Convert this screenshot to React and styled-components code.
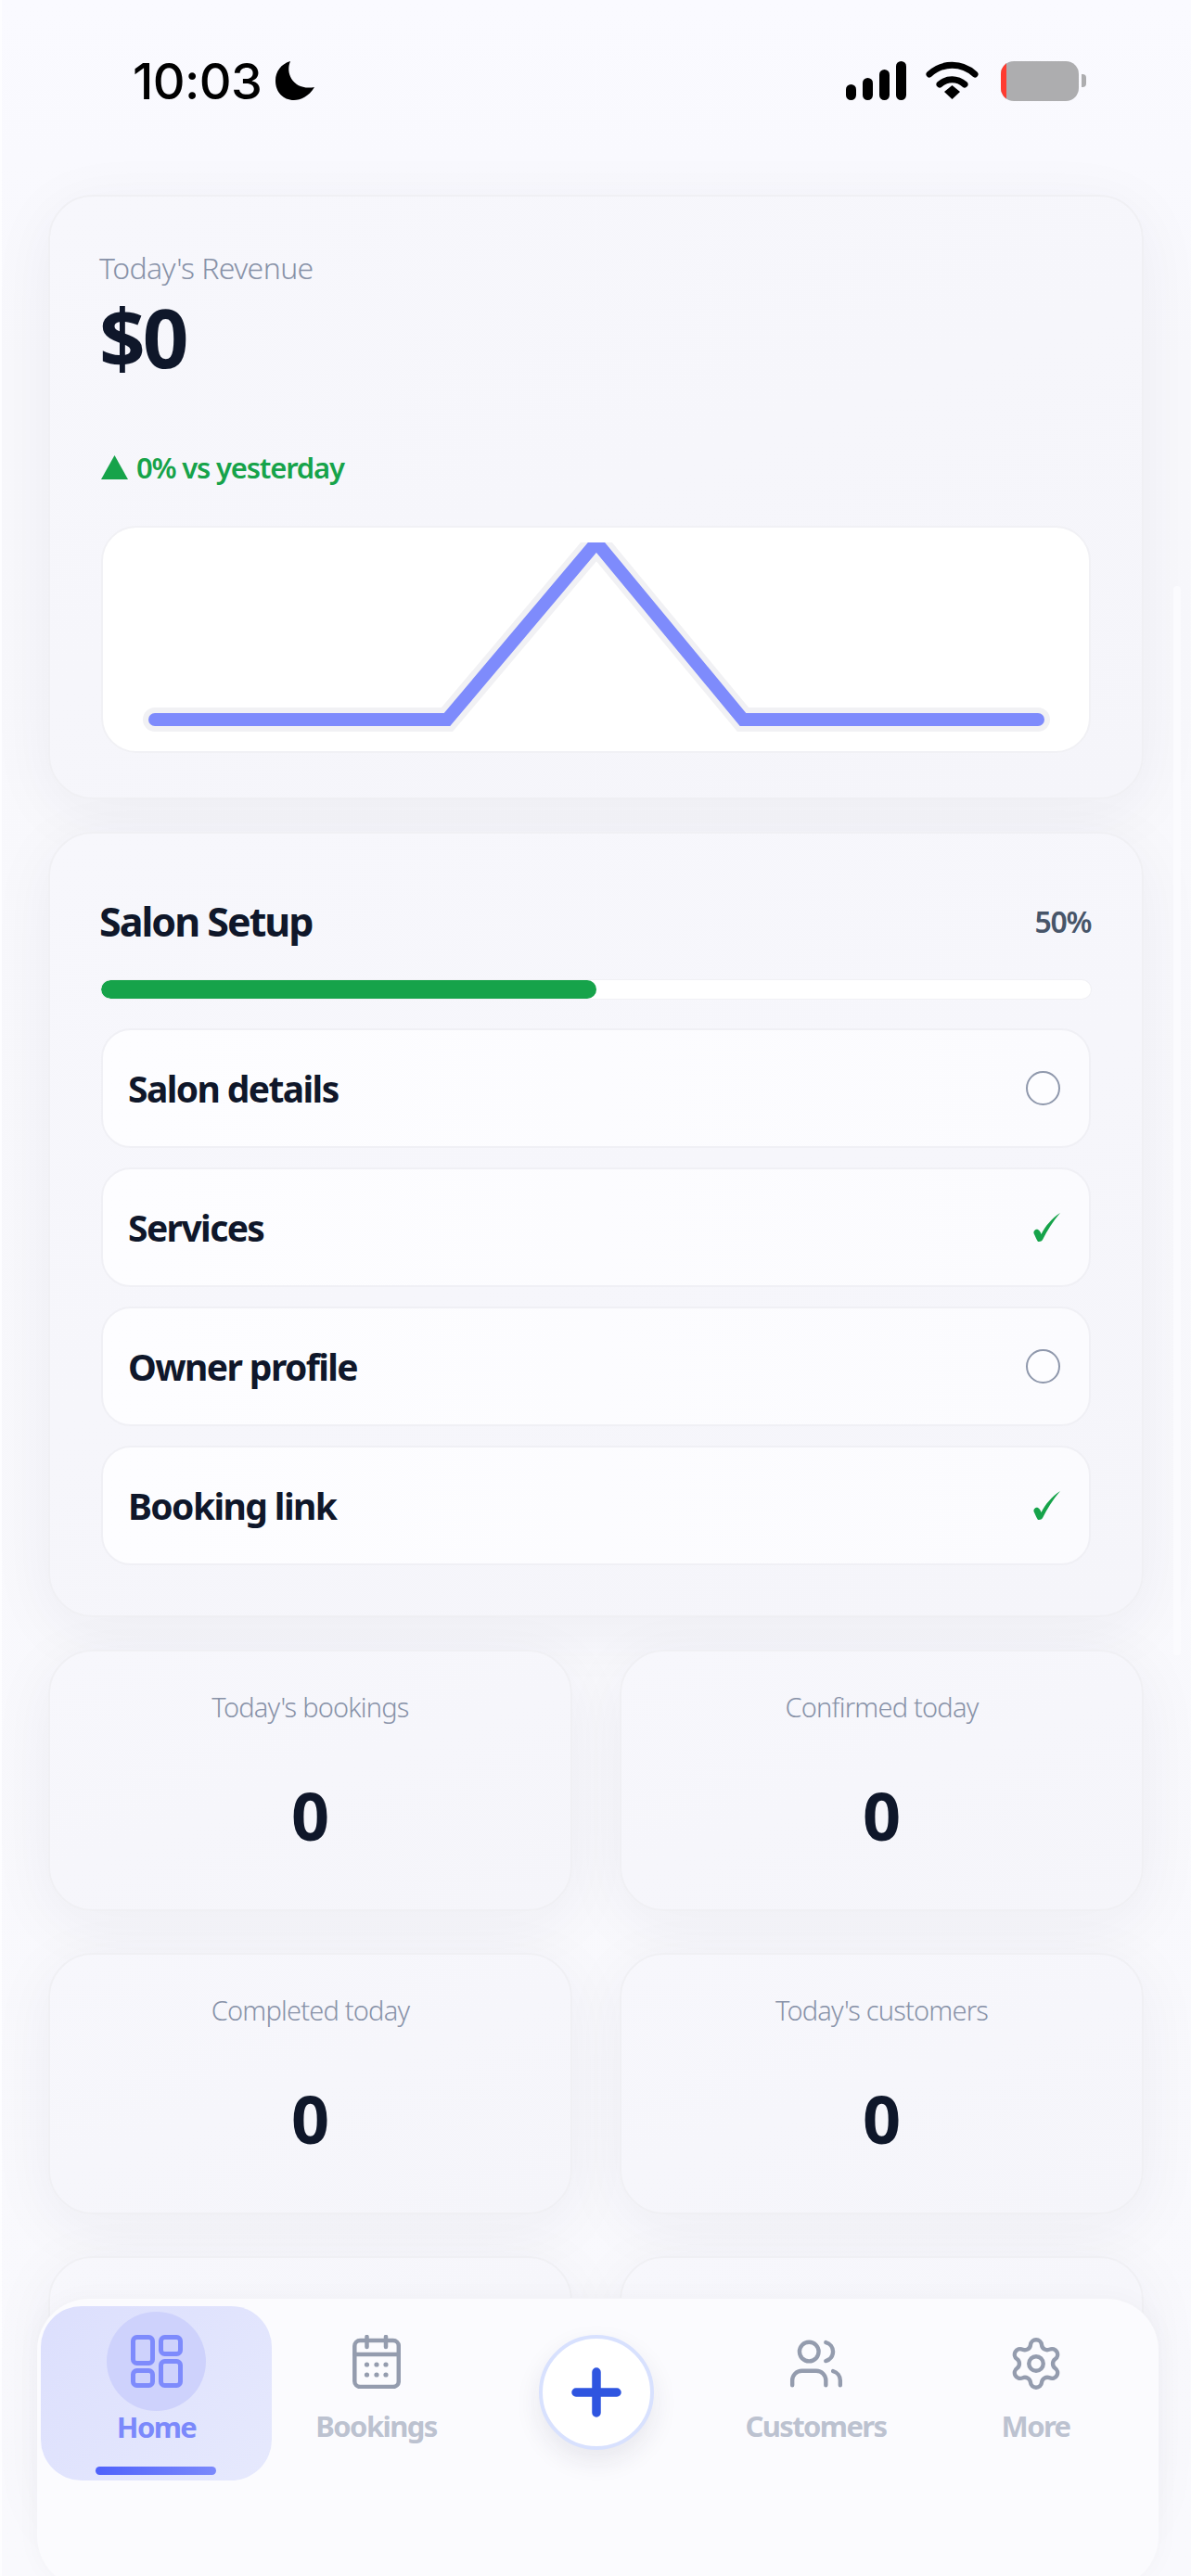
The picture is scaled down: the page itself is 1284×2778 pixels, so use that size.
import React from "react"
import styled, { createGlobalStyle } from "styled-components"
import { Users, Settings } from "lucide-react"

const GlobalStyle = createGlobalStyle`
  html, body {
    margin: 0;
    padding: 0;
    background: #f9f9fe;
  }
  body {
    font-family: "Noto Sans", "Open Sans", sans-serif;
    color: #0f172a;
  }
`

const Phone = styled.div`
  position: relative;
  width: 1284px;
  height: 2778px;
  overflow: hidden;
  background: linear-gradient(180deg, #fafaff 0, #f9f9fe 170px, #f8f8fc 400px, #f9f9fd 100%);
  box-shadow: inset 2px 0 0 #fdfdff;
`

const StatusBar = styled.div`
  height: 176px;
  box-sizing: border-box;
  padding: 65px 113px 0 143px;
  display: flex;
  justify-content: space-between;
  align-items: flex-start;
`

const TimeGroup = styled.div`
  display: flex;
  align-items: center;
  gap: 15px;
  height: 44px;
  color: #000;
  font-family: Inter, sans-serif;
  font-size: 54px;
  font-weight: 500;
  letter-spacing: -0.6px;
`

const StatusIcons = styled.div`
  display: flex;
  align-items: center;
  gap: 21px;
  height: 44px;
`

const Battery = styled.div`
  position: relative;
  width: 84px;
  height: 43px;
  margin-left: 3px;
  border-radius: 14px;
  overflow: hidden;
  background: #adadaf;
  &::before {
    content: "";
    display: block;
    width: 6px;
    height: 100%;
    background: #ff3b30;
  }
`

const BatteryNub = styled.div`
  width: 5px;
  height: 14px;
  margin-left: -18px;
  border-radius: 0 4px 4px 0;
  background: #adadaf;
`

const ScrollThumb = styled.div`
  position: absolute;
  left: 1265px;
  top: 632px;
  width: 8px;
  height: 1153px;
  border-radius: 4px;
  background: #fbfbfe;
`

const Content = styled.div`
  padding: 34px 51px 0 52px;
  display: flex;
  flex-direction: column;
  gap: 35px;
`

const Card = styled.section`
  box-sizing: border-box;
  border-radius: 48px;
  border: 2px solid #f0f0f4;
  background: linear-gradient(160deg, #f7f7fc, #f5f5fa);
  box-shadow: 0 14px 70px rgba(30, 30, 70, 0.055);
`

const RevenueCard = styled(Card)`
  height: 652px;
  padding: 56px 55px 0;
`

const RevenueLabel = styled.div`
  margin-left: -2px;
  font-size: 32px;
  line-height: 42px;
  font-weight: 300;
  letter-spacing: -0.6px;
  color: #8892a8;
`

const RevenueValue = styled.div`
  margin-top: 8px;
  margin-left: -2px;
  font-size: 87px;
  line-height: 90px;
  font-weight: 700;
  letter-spacing: -3px;
  color: #0f172a;
`

const Trend = styled.div`
  margin-top: 76px;
  display: flex;
  align-items: center;
  gap: 9px;
  height: 40px;
  font-size: 31px;
  font-weight: 600;
  letter-spacing: -1.2px;
  color: #16a34a;
`

const ChartBox = styled.div`
  margin-top: 43px;
  height: 245px;
  box-sizing: border-box;
  padding-top: 16px;
  border-radius: 38px;
  border: 2px solid #f1f1f5;
  background: #fff;
  overflow: hidden;
`

const SetupCard = styled(Card)`
  height: 847px;
  padding: 0 55px;
`

const SetupHeader = styled.div`
  height: 158px;
  box-sizing: border-box;
  padding-top: 30px;
  display: flex;
  justify-content: space-between;
  align-items: center;
`

const SetupTitle = styled.h2`
  margin: 0 0 0 -2px;
  font-size: 43px;
  font-weight: 700;
  letter-spacing: -2px;
  color: #0f172a;
`

const SetupPercent = styled.div`
  font-size: 32px;
  font-weight: 600;
  letter-spacing: -1.4px;
  color: #475569;
`

const ProgressTrack = styled.div`
  height: 20px;
  border-radius: 10px;
  background: #fff;
  box-shadow: 0 0 0 1px #f1f1f5;
  overflow: hidden;
`

const ProgressFill = styled.div`
  height: 100%;
  border-radius: 10px;
  background: #16a34a;
`

const TaskList = styled.div`
  margin-top: 32px;
  display: flex;
  flex-direction: column;
  gap: 21px;
`

const TaskRow = styled.div`
  height: 129px;
  box-sizing: border-box;
  padding: 0 31px 0 27px;
  border-radius: 32px;
  border: 2px solid #f0f0f5;
  background: linear-gradient(90deg, #fdfdff, #fbfbfe);
  display: flex;
  justify-content: space-between;
  align-items: center;
`

const TaskName = styled.div`
  font-size: 39px;
  font-weight: 700;
  letter-spacing: -1.6px;
  color: #0f172a;
`

const TaskCircle = styled.span`
  width: 37px;
  height: 37px;
  box-sizing: border-box;
  border-radius: 50%;
  border: 2px solid #8f98ac;
  background: #fdfdff;
`

const StatsGrid = styled.div`
  display: grid;
  grid-template-columns: 565px 565px;
  justify-content: space-between;
  row-gap: 45px;
`

const StatCard = styled(Card)`
  height: 282px;
  padding-top: 40px;
  display: flex;
  flex-direction: column;
  align-items: center;
`

const StatLabel = styled.div`
  font-size: 29px;
  line-height: 40px;
  font-weight: 300;
  letter-spacing: -0.8px;
  color: #8892a8;
`

const StatValue = styled.div`
  margin-top: 51px;
  font-size: 72px;
  line-height: 90px;
  font-weight: 700;
  color: #0f172a;
`

const BottomNav = styled.nav`
  position: absolute;
  left: 40px;
  top: 2479px;
  width: 1209px;
  height: 312px;
  box-sizing: border-box;
  padding: 8px 14px 0 10px;
  border-radius: 56px;
  background: #fbfbfe;
  box-shadow: 0 -1px 0 #f3f3f7, 0 0 28px rgba(30, 30, 70, 0.03);
  display: grid;
  grid-template-columns: repeat(5, 237px);
  align-items: start;
`

const NavItem = styled.div`
  height: 188px;
  box-sizing: border-box;
  display: flex;
  flex-direction: column;
  align-items: center;
  position: relative;
  padding-top: ${(p) => (p.$active ? "6px" : "31px")};
  ${(p) =>
    p.$active &&
    `
    margin: 0 -6px;
    border-radius: 44px;
    background: linear-gradient(135deg, #dcdffd, #e6e9fd);
  `}
`

const NavIcon = styled.div`
  height: 62px;
  display: flex;
  align-items: flex-start;
  justify-content: center;
`

const IconHalo = styled.div`
  width: 107px;
  height: 107px;
  border-radius: 50%;
  background: #ced2fc;
  display: flex;
  align-items: center;
  justify-content: center;
`

const NavLabel = styled.div`
  margin-top: ${(p) => (p.$active ? "-3px" : "16px")};
  font-size: 31px;
  line-height: 40px;
  font-weight: 700;
  letter-spacing: -1.6px;
  color: ${(p) => (p.$active ? "#7b89fb" : "#bcc2d0")};
`

const ActiveBar = styled.div`
  position: absolute;
  left: 59px;
  bottom: 6px;
  width: 130px;
  height: 9px;
  border-radius: 5px;
  background: linear-gradient(90deg, #4f62fb, #7b89fb);
`

const AddSlot = styled.div`
  display: flex;
  justify-content: center;
  padding-top: 31px;
`

const AddButton = styled.div`
  width: 124px;
  height: 124px;
  box-sizing: border-box;
  border-radius: 50%;
  border: 4px solid #d8e1fe;
  background: #fff;
  box-shadow: 0 12px 28px rgba(30, 30, 70, 0.09);
  display: flex;
  align-items: center;
  justify-content: center;
`

function Signal() {
  return (
    <svg width="65" height="42" viewBox="0 0 65 42" fill="#000">
      <rect x="0" y="25" width="11" height="17" rx="5.5" />
      <rect x="18" y="18" width="11" height="24" rx="5.5" />
      <rect x="36" y="9" width="11" height="33" rx="5.5" />
      <rect x="54" y="0" width="11" height="42" rx="5.5" />
    </svg>
  )
}

function Wifi() {
  return (
    <svg width="57" height="42" viewBox="0 0 57 42" fill="none" stroke="#000" strokeLinecap="round">
      <path d="M4 14 C18 1 39 1 53 14" strokeWidth="7" />
      <path d="M15 25 C23 18 34 18 42 25" strokeWidth="7" />
      <path d="M20 33 L28.5 26 L37 33 L28.5 41 Z" fill="#000" stroke="none" />
    </svg>
  )
}

function Moon() {
  return (
    <svg width="42" height="42" viewBox="0 0 42 42" fill="#000">
      <path d="M16 0 C10 14 20 32 42 28 C36 38 27 42 20 42 C8 42 0 33 0 21 C0 11 6 3 16 0 Z" />
    </svg>
  )
}

function TrendArrow() {
  return (
    <svg width="29" height="26" viewBox="0 0 29 26" fill="#16a34a">
      <path d="M14.5 0 L29 26 L0 26 Z" />
    </svg>
  )
}

// the peak runs off the top of the svg, that is how the line gets its flat tip
function RevenueChart() {
  return (
    <svg width="1064" height="225" viewBox="0 0 1064 225" fill="none">
      <path d="M56 191 H371 L532 0 L690 191 H1008" stroke="#f1f1f4" strokeWidth="26" strokeLinecap="round" />
      <path d="M56 191 H371 L532 0 L690 191 H1008" stroke="#7e8bfc" strokeWidth="14" strokeLinecap="round" />
    </svg>
  )
}

function Check() {
  return (
    <svg width="29" height="31" viewBox="0 0 29 31" fill="#16a34a">
      <path d="M29 0 C21 9 15 19 10 29 C9 31 6 31 5 31 C3 28 2 25 0.5 22 C0 19 3 17 5 18 C7 19 8 21 8.5 23 C13 14 20 6 29 0 Z" />
    </svg>
  )
}

function HomeIcon() {
  return (
    <svg width="56" height="57" viewBox="0 0 56 57" fill="none" stroke="#7e8bfc" strokeWidth="5">
      <rect x="2.5" y="2.5" width="21" height="28" rx="4" />
      <rect x="32.5" y="2.5" width="21" height="18" rx="4" />
      <rect x="2.5" y="38.5" width="21" height="16" rx="4" />
      <rect x="32.5" y="28.5" width="21" height="26" rx="4" />
    </svg>
  )
}

function CalendarIcon() {
  return (
    <svg width="52" height="58" viewBox="0 0 52 58" fill="none" stroke="#949cae" strokeWidth="4.5" strokeLinecap="round">
      <rect x="2.3" y="6" width="47.5" height="50" rx="6" />
      <path d="M2.3 21 H49.8 M15.5 2 V13 M36 2 V13" />
      <g fill="#949cae" stroke="none">
        <circle cx="15.5" cy="32" r="2.6" />
        <circle cx="26" cy="32" r="2.6" />
        <circle cx="36" cy="32" r="2.6" />
        <circle cx="15.5" cy="43" r="2.6" />
        <circle cx="26" cy="43" r="2.6" />
        <circle cx="36" cy="43" r="2.6" />
      </g>
    </svg>
  )
}

function PlusIcon() {
  return (
    <svg width="54" height="54" viewBox="0 0 54 54" stroke="#2f55e0" strokeWidth="9.5" strokeLinecap="round">
      <path d="M27 5 V49 M5 27 H49" />
    </svg>
  )
}

const tasks = [
  { name: "Salon details", done: false },
  { name: "Services", done: true },
  { name: "Owner profile", done: false },
  { name: "Booking link", done: true },
]

// the last two cards sit behind the nav, only their tops show
const stats = [
  { label: "Today's bookings", value: 0 },
  { label: "Confirmed today", value: 0 },
  { label: "Completed today", value: 0 },
  { label: "Today's customers", value: 0 },
  {},
  {},
]

export default function App() {
  return (
    <Phone>
      <GlobalStyle />
      <ScrollThumb />
      <StatusBar>
        <TimeGroup>
          10:03
          <Moon />
        </TimeGroup>
        <StatusIcons>
          <Signal />
          <Wifi />
          <Battery />
          <BatteryNub />
        </StatusIcons>
      </StatusBar>

      <Content>
        <RevenueCard>
          <RevenueLabel>Today's Revenue</RevenueLabel>
          <RevenueValue>$0</RevenueValue>
          <Trend>
            <TrendArrow />
            0% vs yesterday
          </Trend>
          <ChartBox>
            <RevenueChart />
          </ChartBox>
        </RevenueCard>

        <SetupCard>
          <SetupHeader>
            <SetupTitle>Salon Setup</SetupTitle>
            <SetupPercent>50%</SetupPercent>
          </SetupHeader>
          <ProgressTrack>
            <ProgressFill style={{ width: "50%" }} />
          </ProgressTrack>
          <TaskList>
            {tasks.map((t) => (
              <TaskRow key={t.name}>
                <TaskName>{t.name}</TaskName>
                {t.done ? <Check /> : <TaskCircle />}
              </TaskRow>
            ))}
          </TaskList>
        </SetupCard>

        <StatsGrid>
          {stats.map((s, i) => (
            <StatCard key={i}>
              {s.label && <StatLabel>{s.label}</StatLabel>}
              {s.label && <StatValue>{s.value}</StatValue>}
            </StatCard>
          ))}
        </StatsGrid>
      </Content>

      <BottomNav>
        <NavItem $active>
          <IconHalo>
            <HomeIcon />
          </IconHalo>
          <NavLabel $active>Home</NavLabel>
          <ActiveBar />
        </NavItem>
        <NavItem>
          <NavIcon>
            <CalendarIcon />
          </NavIcon>
          <NavLabel>Bookings</NavLabel>
        </NavItem>
        <AddSlot>
          <AddButton>
            <PlusIcon />
          </AddButton>
        </AddSlot>
        <NavItem>
          <NavIcon>
            <Users size={62} color="#949cae" strokeWidth={1.7} />
          </NavIcon>
          <NavLabel>Customers</NavLabel>
        </NavItem>
        <NavItem>
          <NavIcon>
            <Settings size={62} color="#949cae" strokeWidth={1.7} />
          </NavIcon>
          <NavLabel>More</NavLabel>
        </NavItem>
      </BottomNav>
    </Phone>
  )
}
